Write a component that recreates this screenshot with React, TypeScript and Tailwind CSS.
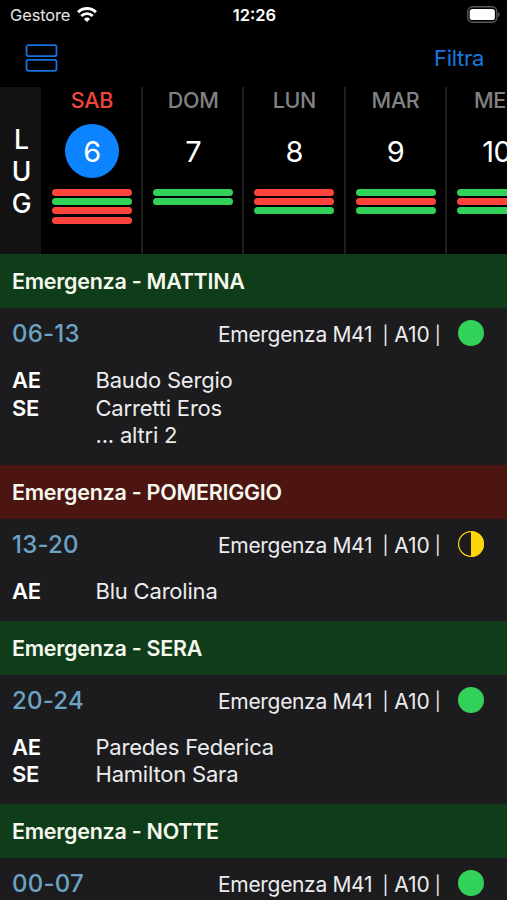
type Status = 'full' | 'half'

type Shift = {
  name: string
  time: string
  status: Status
  covered: boolean
  crew: { role: string; person: string }[]
}

const days = [
  { label: 'SAB', num: 6, bars: ['r', 'g', 'r', 'r'], selected: true },
  { label: 'DOM', num: 7, bars: ['g', 'g'] },
  { label: 'LUN', num: 8, bars: ['r', 'r', 'g'] },
  { label: 'MAR', num: 9, bars: ['g', 'r', 'g'] },
  { label: 'MER', num: 10, bars: ['g', 'r', 'g'] },
]

const shifts: Shift[] = [
  {
    name: 'MATTINA',
    time: '06-13',
    status: 'full',
    covered: true,
    crew: [
      { role: 'AE', person: 'Baudo Sergio' },
      { role: 'SE', person: 'Carretti Eros' },
      { role: '', person: '... altri 2' },
    ],
  },
  {
    name: 'POMERIGGIO',
    time: '13-20',
    status: 'half',
    covered: false,
    crew: [{ role: 'AE', person: 'Blu Carolina' }],
  },
  {
    name: 'SERA',
    time: '20-24',
    status: 'full',
    covered: true,
    crew: [
      { role: 'AE', person: 'Paredes Federica' },
      { role: 'SE', person: 'Hamilton Sara' },
    ],
  },
  { name: 'NOTTE', time: '00-07', status: 'full', covered: true, crew: [] },
]

function WifiIcon() {
  return (
    <svg width="20" height="15" viewBox="0 0 20 15" fill="none" stroke="white" strokeWidth="2.9">
      <path d="M1.1 5.2a12.7 12.7 0 0 1 17.8 0" />
      <path d="M4.3 9a8.1 8.1 0 0 1 11.4 0" />
      <path d="M10 15 6.9 11.9a4.5 4.5 0 0 1 6.2 0z" fill="white" stroke="none" />
    </svg>
  )
}

function BatteryIcon() {
  return (
    <svg width="33" height="17" viewBox="0 0 33 17" fill="none">
      <rect x="0.8" y="0.8" width="29" height="15.4" rx="4.6" stroke="#59595b" strokeWidth="1.4" />
      <rect x="2.7" y="2.9" width="25.2" height="11.2" rx="2.6" fill="white" />
      <path d="M31.2 6v5c.9-.4 1.4-1.4 1.4-2.5s-.5-2.1-1.4-2.5z" fill="#69696b" />
    </svg>
  )
}

function StatusIcon({ status }: { status: Status }) {
  return (
    <svg width="26" height="26" viewBox="0 0 26 26">
      {status === 'full' ? (
        <circle cx="13" cy="13" r="13" fill="#32d159" />
      ) : (
        <>
          <circle cx="13" cy="13" r="12.4" fill="none" stroke="#ffd60a" strokeWidth="1.2" />
          <path d="M13 0a13 13 0 0 1 0 26z" fill="#ffd60a" />
        </>
      )}
    </svg>
  )
}

export default function App() {
  return (
    <div className="flex h-[900px] w-[507px] flex-col overflow-hidden bg-black font-['Inter',sans-serif] text-white">
      {/* Status bar */}
      <div className="grid h-[29px] shrink-0 grid-cols-3 items-center pr-[7px] pl-[10px]">
        <div className="flex items-center gap-[6.5px]">
          <span className="pt-px text-[16.5px] leading-none tracking-[-0.15px] text-[#e4e4e4]">Gestore</span>
          <WifiIcon />
        </div>
        <span className="pt-px pr-px text-center text-[16.5px] leading-none font-semibold">12:26</span>
        <div className="flex justify-end">
          <BatteryIcon />
        </div>
      </div>

      {/* Nav bar */}
      <div className="flex h-[58px] shrink-0 items-center justify-between pr-[23px] pl-[25px]">
        <svg width="34" height="28" viewBox="0 0 34 28" fill="none" stroke="#1473dc" strokeWidth="1.8">
          <rect x="1.5" y="1.2" width="30" height="11" rx="2" />
          <rect x="1.5" y="15.8" width="30" height="11" rx="2" />
        </svg>
        <button className="text-[22px] leading-none tracking-[-0.3px] text-[#1779e0]">Filtra</button>
      </div>

      {/* Week strip */}
      <div className="flex h-[167px] shrink-0">
        <div className="mr-[0.8px] flex w-[41.2px] shrink-0 flex-col items-center bg-[#121212] pt-[36px] pl-[2px] text-[26.5px] leading-[32px] font-medium">
          <span>L</span>
          <span>U</span>
          <span>G</span>
        </div>
        {days.map((day) => (
          <div
            key={day.num}
            className="flex w-[101.2px] shrink-0 flex-col items-center border-r-2 border-[#1f1f20] pl-[0.8px]"
          >
            <span
              className={`mt-[3px] text-[21.5px] leading-[20px] font-medium tracking-[-0.3px] ${day.selected ? 'text-[#f2453c]' : 'text-[#828284]'}`}
            >
              {day.label}
            </span>
            <span
              className={`mt-[14px] flex size-[54px] items-center justify-center rounded-full text-[29px] leading-none tracking-[-0.5px] ${day.selected ? 'bg-[#0d84ff]' : ''}`}
            >
              {day.num}
            </span>
            <div className="mt-[10.7px] flex flex-col gap-[2.4px]">
              {day.bars.map((bar, i) => (
                <div
                  key={i}
                  className={`h-[7px] w-[80px] rounded-full ${bar === 'r' ? 'bg-[#ff453b]' : 'bg-[#32d159]'}`}
                />
              ))}
            </div>
          </div>
        ))}
      </div>

      {/* Shifts */}
      {shifts.map((shift) => (
        <section key={shift.name} className="shrink-0 bg-[#1c1c1e]">
          <h2
            className={`flex h-[54px] items-center pl-[12px] text-[21.5px] font-semibold tracking-[-0.27px] text-[#f6f8ee] ${shift.covered ? 'bg-[#0f3d1a]' : 'bg-[#4c1512]'}`}
          >
            Emergenza - {shift.name}
          </h2>
          <div className="flex h-[50px] items-center pr-[23px] pl-[12px]">
            <span className="mt-[2px] text-[24px] font-medium tracking-[0.2px] text-[#6ba3c4]">{shift.time}</span>
            <div className="mt-[4px] ml-auto flex items-center text-[21px] tracking-[-0.33px] text-[#ececee]">
              <span>Emergenza M41</span>
              <span className="ml-[10.5px] text-[18px]">|</span>
              <span className="ml-[6px] tracking-normal">A10</span>
              <span className="ml-[5px] text-[18px]">|</span>
            </div>
            <span className="ml-[17.5px]">
              <StatusIcon status={shift.status} />
            </span>
          </div>
          <div className="pt-[9px] pb-[15.4px] pl-[12px] text-[22px] leading-[27.5px] tracking-[-0.2px]">
            {shift.crew.map((c) => (
              <div key={c.person} className="flex">
                <span className="w-[83.5px] font-semibold">{c.role}</span>
                <span className="text-[#ececee]">{c.person}</span>
              </div>
            ))}
          </div>
        </section>
      ))}
    </div>
  )
}
